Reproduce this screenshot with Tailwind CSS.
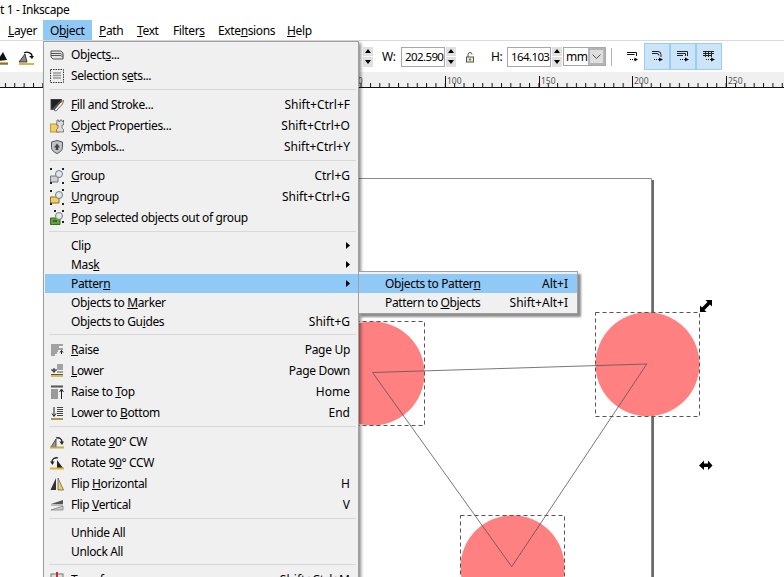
<!DOCTYPE html>
<html>
<head>
<meta charset="utf-8">
<script src="https://cdn.jsdelivr.net/npm/@tailwindcss/browser@4"></script>
</head>
<body class="bg-white">
<div class="relative w-[784px] h-[577px] overflow-hidden bg-white text-black text-[12px] leading-[16px] tracking-[-0.37px] font-['Noto_Sans',sans-serif] flex flex-col">

  <div class="h-[20px] shrink-0 flex items-center bg-white whitespace-nowrap">t 1 - Inkscape</div>

  <nav class="h-[21px] shrink-0 flex items-stretch bg-white border-b border-[#dadada] whitespace-nowrap">
    <div class="w-[43px] pl-[8px] pt-px flex items-center"><span><u>L</u>ayer</span></div>
    <div class="w-[49px] pl-[7px] pt-px flex items-center bg-[#90c8f6]"><span>O<u>b</u>ject</span></div>
    <div class="w-[38px] pl-[7px] pt-px flex items-center"><span><u>P</u>ath</span></div>
    <div class="w-[36px] pl-[7px] pt-px flex items-center"><span><u>T</u>ext</span></div>
    <div class="w-[45px] pl-[7px] pt-px flex items-center"><span>Filter<u>s</u></span></div>
    <div class="w-[69px] pl-[7px] pt-px flex items-center"><span>Exte<u>n</u>sions</span></div>
    <div class="w-[40px] pl-[7px] pt-px flex items-center"><span><u>H</u>elp</span></div>
  </nav>

  <div class="h-[31px] shrink-0 flex items-center bg-white whitespace-nowrap">
    <svg class="w-[9px] h-[16px] shrink-0" viewBox="0 0 9 16"><path d="M-3 12 L3 3 L7 11 Z" fill="#111"/><path d="M-2 13H8V15H-2Z" fill="#e0b040"/><path d="M-2 15H8" stroke="#333"/></svg>
    <svg class="ml-[9px] w-[17px] h-[18px] shrink-0" viewBox="0 0 17 18"><path d="M1 14 L7 6 L9 14 Z" fill="#888" stroke="#222" stroke-width=".8"/><path d="M1 15H16V17H1Z" fill="#e0b040"/><path d="M6 5 A5 4 0 0 1 14 8" fill="none" stroke="#111" stroke-width="1.4"/><path d="M11 8H16L14 11Z" fill="#111"/></svg>

    <div class="ml-[328px] w-[10px] h-[20px] flex flex-col gap-px shrink-0">
      <div class="flex-1 bg-[#e1e1e1] flex items-center justify-center"><svg class="w-[6px] h-[4px]" viewBox="0 0 6 4"><path d="M3 0L6 4H0Z" fill="#000"/></svg></div>
      <div class="flex-1 bg-[#e1e1e1] flex items-center justify-center"><svg class="w-[6px] h-[4px]" viewBox="0 0 6 4"><path d="M3 4L6 0H0Z" fill="#000"/></svg></div>
    </div>
    <span class="ml-[9px] w-[19px] shrink-0">W:</span>
    <div class="w-[44px] h-[20px] shrink-0 border border-[#a8a8a8] bg-white pl-[3px] flex items-center text-[11.5px] tracking-[-0.6px]">202.590</div>
    <div class="ml-px w-[10px] h-[20px] flex flex-col gap-px shrink-0">
      <div class="flex-1 bg-[#e1e1e1] flex items-center justify-center"><svg class="w-[6px] h-[4px]" viewBox="0 0 6 4"><path d="M3 0L6 4H0Z" fill="#000"/></svg></div>
      <div class="flex-1 bg-[#e1e1e1] flex items-center justify-center"><svg class="w-[6px] h-[4px]" viewBox="0 0 6 4"><path d="M3 4L6 0H0Z" fill="#000"/></svg></div>
    </div>
    <svg class="ml-[9px] w-[10px] h-[12px] shrink-0" viewBox="0 0 10 12"><path d="M3 6V3.5A2 2 0 0 1 7 3.5" fill="none" stroke="#555" stroke-width="1"/><rect x="1.5" y="6" width="7" height="5" fill="#f4e8c0" stroke="#555"/><circle cx="5" cy="8.5" r="1" fill="#555"/></svg>
    <span class="ml-[16px] w-[16px] shrink-0">H:</span>
    <div class="w-[44px] h-[20px] shrink-0 border border-[#a8a8a8] bg-white pl-[3px] flex items-center text-[11.5px] tracking-[-0.6px]">164.103</div>
    <div class="ml-px w-[10px] h-[20px] flex flex-col gap-px shrink-0">
      <div class="flex-1 bg-[#e1e1e1] flex items-center justify-center"><svg class="w-[6px] h-[4px]" viewBox="0 0 6 4"><path d="M3 0L6 4H0Z" fill="#000"/></svg></div>
      <div class="flex-1 bg-[#e1e1e1] flex items-center justify-center"><svg class="w-[6px] h-[4px]" viewBox="0 0 6 4"><path d="M3 4L6 0H0Z" fill="#000"/></svg></div>
    </div>
    <div class="ml-px w-[43px] h-[19px] shrink-0 border border-[#a8a8a8] flex items-stretch">
      <span class="w-[24px] pl-[2px] flex items-center">mm</span>
      <div class="flex-1 bg-[#dedede] border-2 border-[#b4b4b4] flex items-center justify-center"><svg class="w-[9px] h-[5px]" viewBox="0 0 9 5"><path d="M.5.5L4.5 4.5L8.5.5" fill="none" stroke="#555"/></svg></div>
    </div>
    <div class="ml-[5px] w-px h-[18px] bg-[#b0b0b0] shrink-0"></div>
    <div class="ml-[10px] w-[21px] h-[27px] shrink-0 flex items-center justify-center">
      <svg class="w-[11px] h-[10px]" viewBox="0 0 11 10"><path d="M0 .5H9.5V4M0 2.5H7.5" fill="none" stroke="#111"/><path d="M3 7.5H8" stroke="#111" stroke-dasharray="1 1"/><path d="M7.5 5.5L11 7.5L7.5 9.5Z" fill="#111"/></svg>
    </div>
    <div class="ml-px w-[26px] h-[27px] shrink-0 bg-[#cce4f7] border border-[#99ccf7] flex items-center justify-center">
      <svg class="w-[12px] h-[11px]" viewBox="0 0 12 11"><path d="M1 .5H7A3 3 0 0 1 10 3.5V6M1 2.5H6A2 2 0 0 1 8 4.5" fill="none" stroke="#222"/><path d="M3 8.5H8" stroke="#222" stroke-dasharray="1 1"/><path d="M8 6.5L12 8.5L8 10.5Z" fill="#111"/></svg>
    </div>
    <div class="w-[26px] h-[27px] shrink-0 bg-[#cce4f7] border border-[#99ccf7] flex items-center justify-center">
      <svg class="w-[12px] h-[11px]" viewBox="0 0 12 11"><path d="M0 .5H10.5V5M0 2.5H8.5V5M0 4.5H6" fill="none" stroke="#222"/><path d="M3 8.5H8" stroke="#222" stroke-dasharray="1 1"/><path d="M8 6.5L12 8.5L8 10.5Z" fill="#111"/></svg>
    </div>
    <div class="w-[26px] h-[27px] shrink-0 bg-[#cce4f7] border border-[#99ccf7] flex items-center justify-center">
      <svg class="w-[12px] h-[11px]" viewBox="0 0 12 11"><path d="M0 .5H11M0 2.5H11M0 4.5H9M2.5 0V6M5.5 0V6M8.5 0V6" fill="none" stroke="#222"/><path d="M3 8.5H8" stroke="#222" stroke-dasharray="1 1"/><path d="M8 6.5L12 8.5L8 10.5Z" fill="#111"/></svg>
    </div>
  </div>

  <svg class="h-[16px] w-[784px] shrink-0 bg-[#f0f0f0] tracking-normal" viewBox="0 72 784 16">
    <defs><pattern id="tk" x="4.9" y="72" width="9.36" height="16" patternUnits="userSpaceOnUse"><rect x="0" y="11" width="1" height="4" fill="#111"/></pattern></defs>
    <rect x="0" y="72" width="784" height="16" fill="url(#tk)"/>
    <rect x="0" y="87" width="784" height="1" fill="#111"/>
    <rect x="445" y="76" width="1" height="11" fill="#111"/>
    <rect x="539" y="76" width="1" height="11" fill="#111"/>
    <rect x="632" y="76" width="1" height="11" fill="#111"/>
    <rect x="726" y="76" width="1" height="11" fill="#111"/>
    <g font-size="8.5" fill="#555" font-family="Noto Sans, sans-serif">
      <text x="353" y="84">50</text>
      <text x="447" y="84">100</text>
      <text x="541" y="84">150</text>
      <text x="634" y="84">200</text>
      <text x="728" y="84">250</text>
    </g>
  </svg>

  <main class="relative flex-1 min-h-0 bg-white">
    <svg class="absolute inset-0 w-full h-full" viewBox="0 88 784 489">
      <path d="M43 178.5H651.5V577" fill="none" stroke="#8a8a8a"/>
      <rect x="652" y="180" width="2" height="397" fill="#6b6b6b"/>
      <circle cx="372.5" cy="373.5" r="52" fill="#ff8080"/>
      <circle cx="647.5" cy="364.3" r="52" fill="#ff8080"/>
      <circle cx="512.5" cy="567.3" r="52" fill="#ff8080"/>
      <g fill="none" stroke="#555" stroke-dasharray="4 3">
        <rect x="320.5" y="321.5" width="104" height="104"/>
        <rect x="595.5" y="312.5" width="104" height="104"/>
        <rect x="460.5" y="515.5" width="104" height="104"/>
      </g>
      <path d="M372.5 372.5L646.8 364L511.7 566.7Z" fill="none" stroke="#555" stroke-width=".8"/>
      <path d="M700 312V305.5L702 307.5L707.5 302L705.5 300H712V306.5L710 304.5L704.5 310L706.500 312Z" fill="#000"/>
      <path d="M699 465.500L704 460.500V463.500H708V460.500L712.500 465.500L708 470V467H704V470Z" fill="#000"/>
    </svg>
  </main>

  <!-- Object menu -->
  <div class="absolute left-[43px] top-[41px] w-[316px] h-[560px] border border-[#a0a0a0] bg-[#f0f0f0] pt-[2px] shadow-[2px_2px_3px_rgba(0,0,0,.45)] whitespace-nowrap">

    <div class="h-[21px] flex items-center pr-[8px]">
      <svg class="ml-[5px] w-[16px] h-[16px] shrink-0" viewBox="0 0 16 16"><path d="M2 4H12L14 6V12H4L2 10Z" fill="#e6e6e6" stroke="#555"/><path d="M2 6.500H12L14 8.500M2 8.500H12L14 10.500" fill="none" stroke="#555"/></svg>
      <span class="ml-[6px]">Object<u>s</u>...</span>
    </div>
    <div class="h-[21px] flex items-center pr-[8px]">
      <svg class="ml-[5px] w-[16px] h-[16px] shrink-0" viewBox="0 0 16 16"><rect x="1.500" y="1.500" width="13" height="13" fill="#eee" stroke="#333" stroke-dasharray="1.500 1"/><path d="M4 5H12M4 7.500H12M4 10H12" stroke="#999" stroke-width="1.500"/></svg>
      <span class="ml-[6px]">Selection s<u>e</u>ts...</span>
    </div>
    <div class="h-px bg-[#d8d8d8] mt-[3px] mb-[4px] ml-[5px] mr-[2px]"></div>

    <div class="h-[21px] flex items-center pr-[8px]">
      <svg class="ml-[5px] w-[16px] h-[16px] shrink-0" viewBox="0 0 16 16"><path d="M1.500 2H13V5L6 13H1.500Z" fill="#555"/><path d="M2 2.500H12.500L2.500 12.500Z" fill="#222"/><path d="M5 13L12 5L14.500 3.500L13.500 7L7 14Z" fill="#fff" stroke="#222" stroke-width=".7"/><path d="M12 5L14.500 3.500L13.500 7Z" fill="#e0a800"/></svg>
      <span class="ml-[6px]"><u>F</u>ill and Stroke...</span>
      <span class="ml-auto tracking-normal">Shift+Ctrl+F</span>
    </div>
    <div class="h-[21px] flex items-center pr-[8px]">
      <svg class="ml-[5px] w-[16px] h-[16px] shrink-0" viewBox="0 0 16 16"><rect x="1.500" y="6" width="8" height="8" fill="#f5cf5a" stroke="#b99a3a"/><path d="M8 2H9.500V3.500H11V2H13V3.500H14.500V2V7H13V10L14.500 11.500V14H7.500V11.500L9 10V7H7.500Z" fill="#ddd" stroke="#666" stroke-width=".8"/></svg>
      <span class="ml-[6px]"><u>O</u>bject Properties...</span>
      <span class="ml-auto tracking-normal">Shift+Ctrl+O</span>
    </div>
    <div class="h-[21px] flex items-center pr-[8px]">
      <svg class="ml-[5px] w-[16px] h-[16px] shrink-0" viewBox="0 0 16 16"><path d="M8 1.500L13.500 3V8.500C13.500 11.500 10.500 13.500 8 14.500C5.500 13.500 2.500 11.500 2.500 8.500V3Z" fill="#bfc4ca" stroke="#555"/><path d="M8 4.500L11 8.500H9L9.500 11H6.500L7 8.500H5Z" fill="#444"/></svg>
      <span class="ml-[6px]">S<u>y</u>mbols...</span>
      <span class="ml-auto tracking-normal">Shift+Ctrl+Y</span>
    </div>
    <div class="h-px bg-[#d8d8d8] mt-[3px] mb-[4px] ml-[5px] mr-[2px]"></div>

    <div class="h-[21px] flex items-center pr-[8px]">
      <svg class="ml-[5px] w-[16px] h-[16px] shrink-0" viewBox="0 0 16 16"><path d="M1.500 8H9V14H1.500Z" fill="#ccd2d8" stroke="#777"/><circle cx="10" cy="6" r="3.500" fill="#dfe8f0" stroke="#777"/><path d="M1 1H3M13 1H15M1 15H3M13 15H15" stroke="#222" stroke-width="2"/></svg>
      <span class="ml-[6px]"><u>G</u>roup</span>
      <span class="ml-auto tracking-normal">Ctrl+G</span>
    </div>
    <div class="h-[21px] flex items-center pr-[8px]">
      <svg class="ml-[5px] w-[16px] h-[16px] shrink-0" viewBox="0 0 16 16"><path d="M1.500 8H10V14H1.500Z" fill="#f5cf5a" stroke="#8a7030"/><circle cx="10" cy="6" r="3.500" fill="#dfe8f0" stroke="#777"/><path d="M1 2H3M13 1H15M1 15H3M13 15H15" stroke="#222" stroke-width="2"/></svg>
      <span class="ml-[6px]"><u>U</u>ngroup</span>
      <span class="ml-auto tracking-normal">Shift+Ctrl+G</span>
    </div>
    <div class="h-[21px] flex items-center pr-[8px]">
      <svg class="ml-[5px] w-[16px] h-[16px] shrink-0" viewBox="0 0 16 16"><path d="M1.500 8H11V14.500H1.500Z" fill="#5da33a" stroke="#3a6a22"/><path d="M4 11H8" stroke="#222"/><circle cx="10" cy="6" r="3.500" fill="#dfe8f0" stroke="#777"/><path d="M5 1H7M13 1H15M13 12H15" stroke="#222" stroke-width="2"/></svg>
      <span class="ml-[6px]"><u>P</u>op selected objects out of group</span>
    </div>
    <div class="h-px bg-[#d8d8d8] mt-[3px] mb-[4px] ml-[5px] mr-[2px]"></div>

    <div class="h-[19px] flex items-center pl-[27px] pr-[8px]">
      <span>Clip</span>
      <svg class="ml-auto w-[4px] h-[7px]" viewBox="0 0 4 7"><path d="M0 0L4 3.500L0 7Z" fill="#000"/></svg>
    </div>
    <div class="h-[19px] flex items-center pl-[27px] pr-[8px]">
      <span>Mas<u>k</u></span>
      <svg class="ml-auto w-[4px] h-[7px]" viewBox="0 0 4 7"><path d="M0 0L4 3.500L0 7Z" fill="#000"/></svg>
    </div>
    <div class="h-[19px] flex items-center pl-[26px] pr-[8px] ml-px bg-[#90c8f6]">
      <span>Patter<u>n</u></span>
      <svg class="ml-auto w-[4px] h-[7px]" viewBox="0 0 4 7"><path d="M0 0L4 3.500L0 7Z" fill="#000"/></svg>
    </div>
    <div class="h-[19px] flex items-center pl-[27px] pr-[8px]"><span>Objects to <u>M</u>arker</span></div>
    <div class="h-[19px] flex items-center pl-[27px] pr-[8px]">
      <span>Objects to Gu<u>i</u>des</span>
      <span class="ml-auto tracking-normal">Shift+G</span>
    </div>
    <div class="h-px bg-[#d8d8d8] mt-[3px] mb-[4px] ml-[5px] mr-[2px]"></div>

    <div class="h-[21px] flex items-center pr-[8px]">
      <svg class="ml-[5px] w-[16px] h-[16px] shrink-0" viewBox="0 0 16 16"><path d="M2 3H14M2 5H10M2 7H14M2 9H9M2 11H8M2 13H6" stroke="#555" stroke-width="1.200"/><path d="M12.500 12V9M11 10.500L12.500 8.500L14 10.500" fill="none" stroke="#222"/></svg>
      <span class="ml-[6px]"><u>R</u>aise</span>
      <span class="ml-auto tracking-[-0.3px]">Page Up</span>
    </div>
    <div class="h-[21px] flex items-center pr-[8px]">
      <svg class="ml-[5px] w-[16px] h-[16px] shrink-0" viewBox="0 0 16 16"><path d="M8 2H14M8 4H14M8 6H14M8 9H14M2 11.500H14" stroke="#555" stroke-width="1.200"/><path d="M2 12H14V14H2Z" fill="#d8bd55"/><path d="M5 5V9M3.500 7.500L5 9.500L6.500 7.500M2 7H8" fill="none" stroke="#222"/></svg>
      <span class="ml-[6px]"><u>L</u>ower</span>
      <span class="ml-auto tracking-[-0.3px]">Page Down</span>
    </div>
    <div class="h-[21px] flex items-center pr-[8px]">
      <svg class="ml-[5px] w-[16px] h-[16px] shrink-0" viewBox="0 0 16 16"><path d="M2 2.500H14" stroke="#555" stroke-width="2"/><path d="M2 6H9M2 8H9M2 10H9M2 12H9M2 14H9" stroke="#444" stroke-width="1.200"/><path d="M12.500 15V6M10.500 8L12.500 5L14.500 8" fill="none" stroke="#222"/></svg>
      <span class="ml-[6px]">Raise to <u>T</u>op</span>
      <span class="ml-auto tracking-normal">Home</span>
    </div>
    <div class="h-[21px] flex items-center pr-[8px]">
      <svg class="ml-[5px] w-[16px] h-[16px] shrink-0" viewBox="0 0 16 16"><path d="M8 2.500H14M8 4.500H14M8 6.500H14M8 8.500H14M8 10.500H14" stroke="#444" stroke-width="1.200"/><path d="M2 13H14V15H2Z" fill="#ad9550"/><path d="M5 2V11M3 8.500L5 11.500L7 8.500" fill="none" stroke="#222"/></svg>
      <span class="ml-[6px]">Lower to <u>B</u>ottom</span>
      <span class="ml-auto tracking-normal">End</span>
    </div>
    <div class="h-px bg-[#d8d8d8] mt-[3px] mb-[4px] ml-[5px] mr-[2px]"></div>

    <div class="h-[21px] flex items-center pr-[8px]">
      <svg class="ml-[5px] w-[16px] h-[16px] shrink-0" viewBox="0 0 16 16"><path d="M2 13L7 5V13Z" fill="#999" stroke="#333" stroke-width=".8"/><path d="M1 13.500H15" stroke="#caa94a" stroke-width="2"/><path d="M7 4A4.500 4 0 0 1 13 8" fill="none" stroke="#222" stroke-width="1.300"/><path d="M10.500 7.500H15L13 11Z" fill="#222"/></svg>
      <span class="ml-[6px]">Rotate <u>9</u>0° CW</span>
    </div>
    <div class="h-[21px] flex items-center pr-[8px]">
      <svg class="ml-[5px] w-[16px] h-[16px] shrink-0" viewBox="0 0 16 16"><path d="M8 13V5L14 13Z" fill="#222"/><path d="M1 13.500H15" stroke="#e0b030" stroke-width="2"/><path d="M9 3A4.500 4 0 0 0 3 7" fill="none" stroke="#222" stroke-width="1.300"/><path d="M1 6.500H5.500L3.500 10Z" fill="#222"/></svg>
      <span class="ml-[6px]">Rotate 9<u>0</u>° CCW</span>
    </div>
    <div class="h-[21px] flex items-center pr-[8px]">
      <svg class="ml-[5px] w-[16px] h-[16px] shrink-0" viewBox="0 0 16 16"><path d="M7 2V14H1.500Z" fill="#333"/><path d="M9 2V14H14.500Z" fill="#f0d060" stroke="#555" stroke-width=".7"/></svg>
      <span class="ml-[6px]">Flip <u>H</u>orizontal</span>
      <span class="ml-auto tracking-normal">H</span>
    </div>
    <div class="h-[21px] flex items-center pr-[8px]">
      <svg class="ml-[5px] w-[16px] h-[16px] shrink-0" viewBox="0 0 16 16"><path d="M14 3V7H2Z" fill="#555"/><path d="M14 9V13H2Z" fill="#ccc" stroke="#777" stroke-width=".7"/><path d="M2 8H14" stroke="#888"/></svg>
      <span class="ml-[6px]">Flip <u>V</u>ertical</span>
      <span class="ml-auto tracking-normal">V</span>
    </div>
    <div class="h-px bg-[#d8d8d8] mt-[3px] mb-[4px] ml-[5px] mr-[2px]"></div>

    <div class="h-[19px] flex items-center pl-[27px] pr-[8px]"><span>Unhide All</span></div>
    <div class="h-[19px] flex items-center pl-[27px] pr-[8px]"><span>Unlock All</span></div>
    <div class="h-px bg-[#d8d8d8] mt-[3px] mb-[4px] ml-[5px] mr-[2px]"></div>

    <div class="h-[21px] flex items-center pr-[8px]">
      <svg class="ml-[5px] w-[16px] h-[16px] shrink-0" viewBox="0 0 16 16"><rect x="2" y="2" width="12" height="12" fill="#ddd" stroke="#777"/><path d="M8 0V5" stroke="#c03030" stroke-width="2"/></svg>
      <span class="ml-[6px]">Transfor<u>m</u>...</span>
      <span class="ml-auto tracking-normal">Shift+Ctrl+M</span>
    </div>
  </div>

  <!-- Pattern submenu -->
  <div class="absolute left-[358px] top-[271px] w-[220px] h-[43px] border border-[#a0a0a0] bg-[#f0f0f0] pt-[2px] shadow-[3px_3px_2px_rgba(0,0,0,.45)] whitespace-nowrap">
    <div class="h-[19px] flex items-center pl-[26px] pr-[9px] bg-[#90c8f6]">
      <span>Objects to Patter<u>n</u></span>
      <span class="ml-auto tracking-normal">Alt+I</span>
    </div>
    <div class="h-[19px] flex items-center pl-[26px] pr-[9px]">
      <span>Pattern to <u>O</u>bjects</span>
      <span class="ml-auto tracking-normal">Shift+Alt+I</span>
    </div>
  </div>
</div>
</body>
</html>
